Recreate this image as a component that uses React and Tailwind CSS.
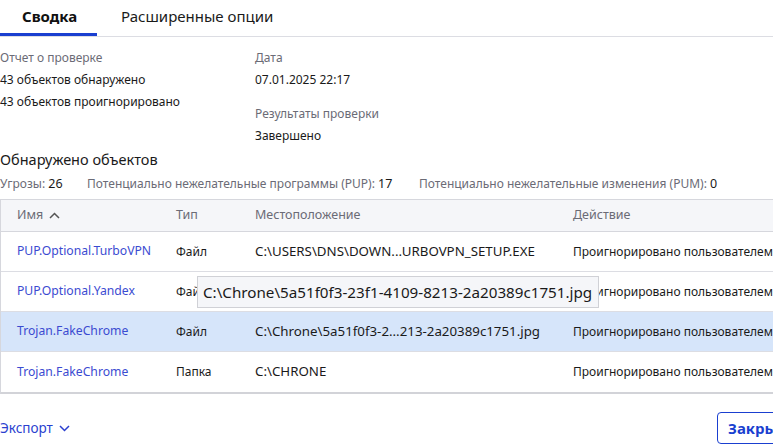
import React from "react";

const rows = [
  { name: "PUP.Optional.TurboVPN", type: "Файл", loc: "C:\\USERS\\DNS\\DOWN...URBOVPN_SETUP.EXE", act: "Проигнорировано пользователем" },
  { name: "PUP.Optional.Yandex", type: "Файл", loc: "", act: "Проигнорировано пользователем" },
  { name: "Trojan.FakeChrome", type: "Файл", loc: "C:\\Chrone\\5a51f0f3-2...213-2a20389c1751.jpg", act: "Проигнорировано пользователем", sel: true },
  { name: "Trojan.FakeChrome", type: "Папка", loc: "C:\\CHRONE", act: "Проигнорировано пользователем" },
];

export default function App() {
  return (
    <div className="w-[773px] h-[446px] overflow-hidden bg-white text-[#1a1a1a] relative" style={{ fontFamily: '"Noto Sans", "Open Sans", sans-serif' }}>
      <div className="flex h-[37px] border-b border-[#dcdde3]">
        <div className="w-[97px] flex flex-col">
          <div className="flex-1 flex items-center pl-[22px] text-[15px] font-bold text-[#111]">Сводка</div>
          <div className="h-[3px] bg-[#1a3fd0]"></div>
        </div>
        <div className="flex items-center pl-[24px] text-[15px] pb-[4px] text-[#1a1a1a]">Расширенные опции</div>
      </div>

      <div className="flex pt-[10px] text-[12px] leading-[22px]">
        <div className="w-[255px]">
          <div className="text-[#6b6b76]">Отчет о проверке</div>
          <div>43 объектов обнаружено</div>
          <div>43 объектов проигнорировано</div>
        </div>
        <div>
          <div className="text-[#6b6b76]">Дата</div>
          <div>07.01.2025 22:17</div>
          <div className="mt-[12px] text-[#6b6b76]">Результаты проверки</div>
          <div>Завершено</div>
        </div>
      </div>

      <div className="mt-[1px] text-[14.5px] leading-[22px]">Обнаружено объектов</div>
      <div className="flex text-[12px] leading-[20px] mt-[4px] text-[#6b6b76]">
        <div className="w-[87px]">Угрозы: <span className="text-[#1a1a1a] text-[12.5px]">26</span></div>
        <div className="w-[332px]">Потенциально нежелательные программы (PUP): <span className="text-[#1a1a1a] text-[12.5px]">17</span></div>
        <div>Потенциально нежелательные изменения (PUM): <span className="text-[#1a1a1a] text-[12.5px]">0</span></div>
      </div>

      <div className="mt-[5px] w-[790px] border-l border-t border-[#d6d7dd] border-b-2 border-b-[#d2d3d8] text-[12px]">
        <div className="flex h-[32px] items-center bg-[#f5f6f9] border-b border-[#d6d7dd] text-[#6b6b76] text-[12.5px]">
          <div className="w-[175px] pl-[16px] flex items-center gap-[6px]">
            Имя
            <svg width="11" height="7" viewBox="0 0 11 7" fill="none"><path d="M1 6 L5.5 1.5 L10 6" stroke="#555" strokeWidth="1.5" /></svg>
          </div>
          <div className="w-[79px]">Тип</div>
          <div className="w-[318px]">Местоположение</div>
          <div>Действие</div>
        </div>
        {rows.map((r, i) => (
          <div key={i} className={`flex h-[40px] items-center ${i < rows.length - 1 ? "border-b border-[#dcdde3]" : ""} ${r.sel ? "bg-[#d6e5fa]" : ""}`}>
            <div className="w-[175px] pl-[16px] text-[#3b4bd1] text-[12.2px]">{r.name}</div>
            <div className="w-[79px] text-[12px]">{r.type}</div>
            <div className="w-[318px] text-[13.3px] whitespace-nowrap">{r.loc}</div>
            <div className="text-[12px] whitespace-nowrap">{r.act}</div>
          </div>
        ))}
      </div>

      <div className="absolute left-[197px] top-[276px] w-[402px] h-[32px] bg-[#f5f6f9] border border-[#d0d1d6] flex items-center pl-[5px] text-[15.2px] text-[#1a1a1a] whitespace-nowrap overflow-hidden">
        C:\Chrone\5a51f0f3-23f1-4109-8213-2a20389c1751.jpg
      </div>

      <div className="flex items-center justify-between mt-[18px]">
        <div className="flex items-center gap-[6px] text-[13.5px] text-[#2b3fcf]">
          Экспорт
          <svg width="11" height="7" viewBox="0 0 11 7" fill="none"><path d="M1 1 L5.5 5.5 L10 1" stroke="#2b3fcf" strokeWidth="1.5" /></svg>
        </div>
        <div className="mr-[-30px] h-[32px] w-[86px] border border-[#1a3fd0] rounded-[4px] flex items-center pl-[10px] text-[15px] font-bold text-[#1a3fd0] whitespace-nowrap">Закрыть</div>
      </div>
    </div>
  );
}
